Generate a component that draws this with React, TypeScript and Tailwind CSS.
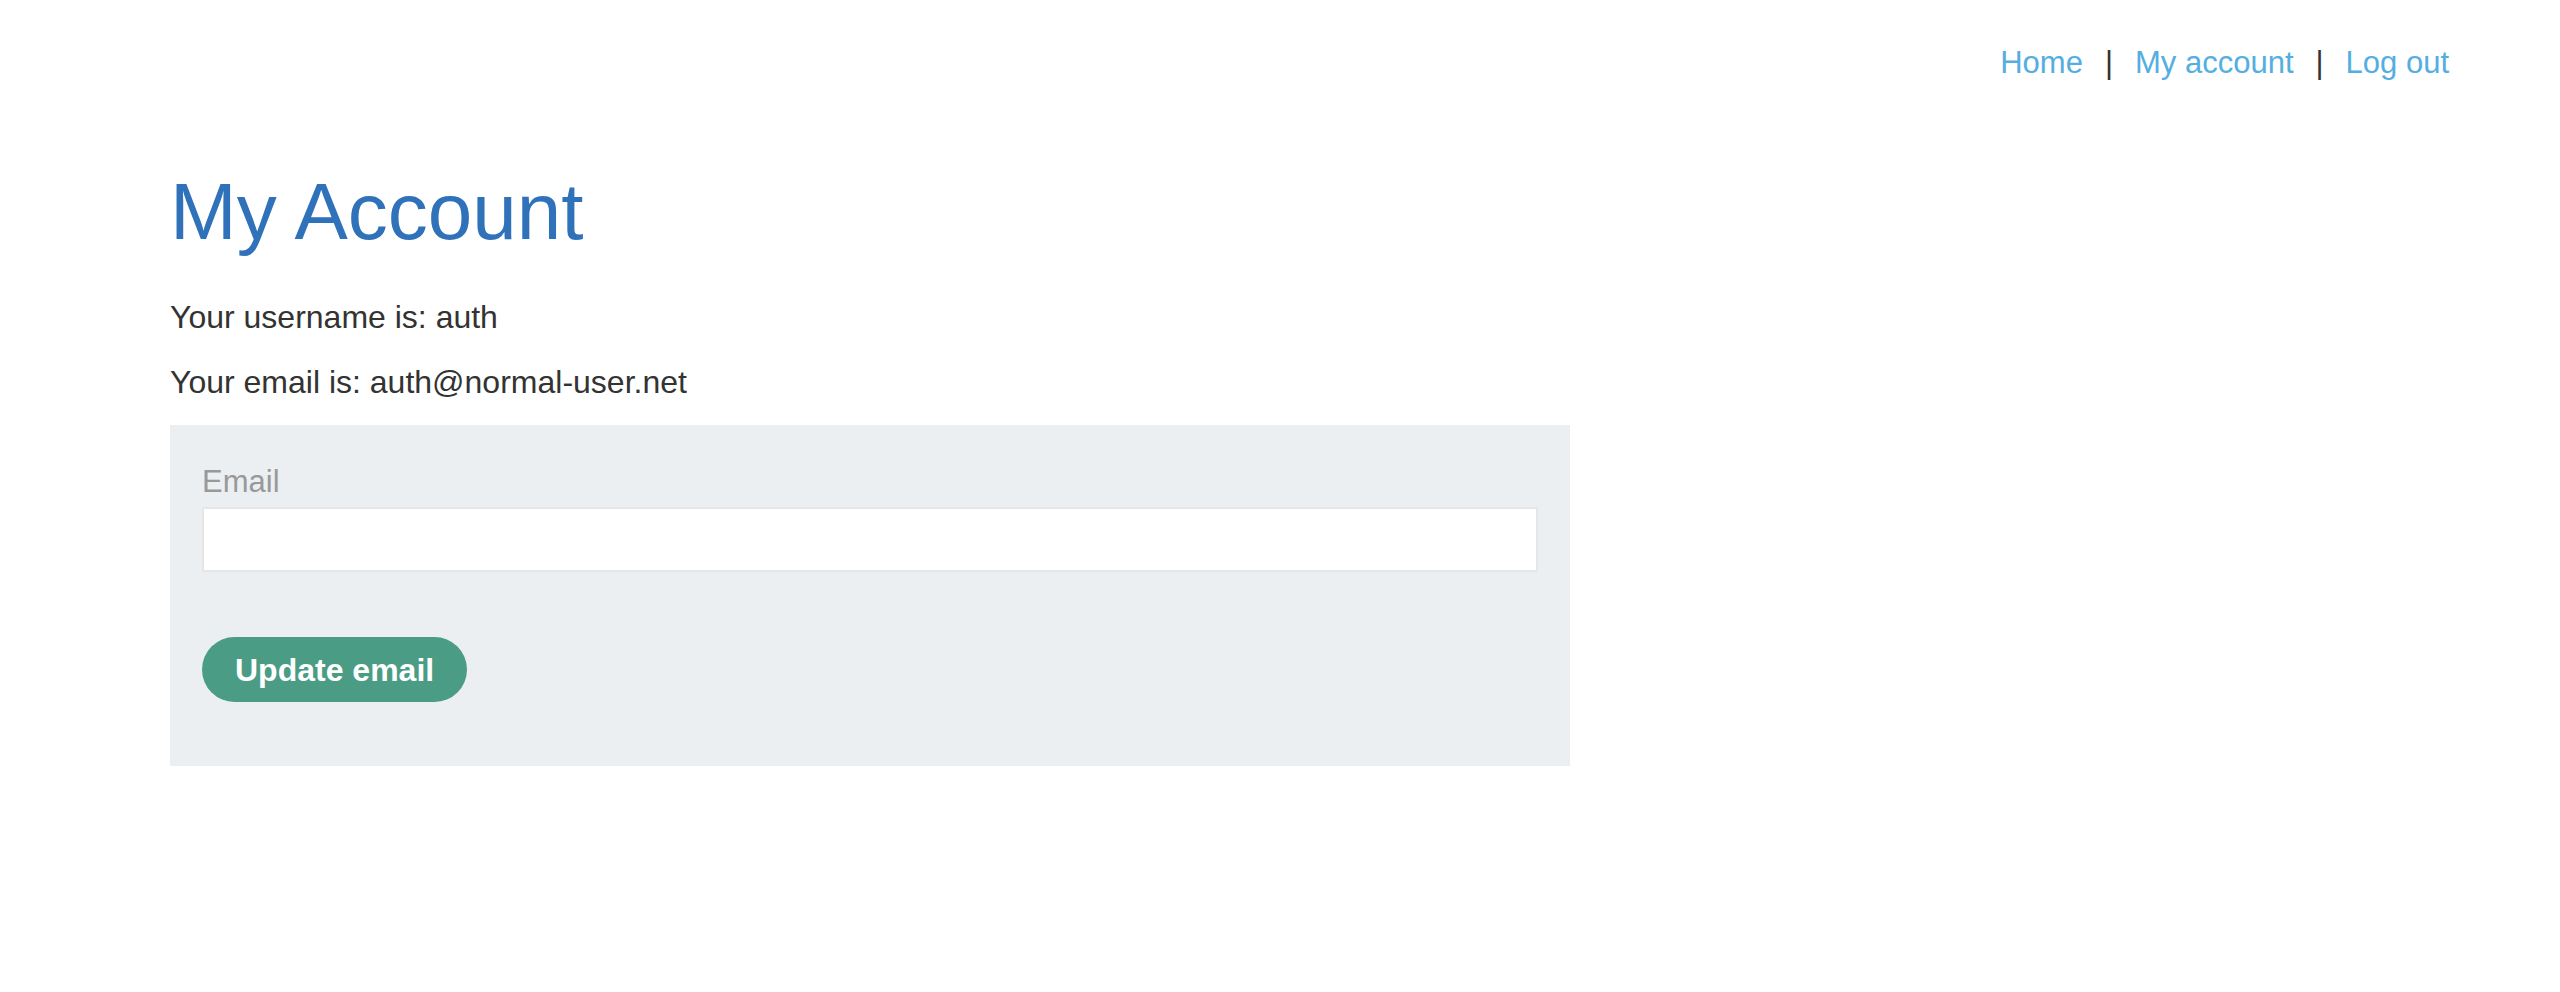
export default function App() {
  return (
    <div
      className="min-h-screen bg-white text-[#333332]"
      style={{ fontFamily: '"Liberation Sans", Arial, sans-serif' }}
    >
      {/* Top navigation */}
      <header className="flex justify-end pt-[45px] pr-[111px]">
        <nav className="flex items-center gap-[22px] text-[31px] leading-[36px]">
          <a href="#" className="text-[#54aee1]">Home</a>
          <span>|</span>
          <a href="#" className="text-[#54aee1]">My account</a>
          <span>|</span>
          <a href="#" className="text-[#54aee1]">Log out</a>
        </nav>
      </header>

      <main className="pl-[170px] pt-[86px]">
        <h1 className="text-[80px] leading-[90px] text-[#3072ba]">My Account</h1>
        <p className="mt-[42px] text-[32px] leading-[36px]">Your username is: auth</p>
        <p className="mt-[29px] text-[32px] leading-[36px]">Your email is: auth@normal-user.net</p>

        <form className="mt-[25px] w-[1400px] bg-[#ebeff2] px-[32px] pt-[39px] pb-[64px]">
          <label className="block text-[31px] leading-[36px] text-[#999999]">Email</label>
          <input
            type="email"
            className="mt-[7px] block h-[65px] w-full border-2 border-[#e6e6e6] bg-white outline-none"
          />
          <button
            type="button"
            className="mt-[65px] h-[65px] rounded-full bg-[#4a9c84] px-[33px] text-[32px] font-bold text-white"
          >
            Update email
          </button>
        </form>
      </main>
    </div>
  )
}
